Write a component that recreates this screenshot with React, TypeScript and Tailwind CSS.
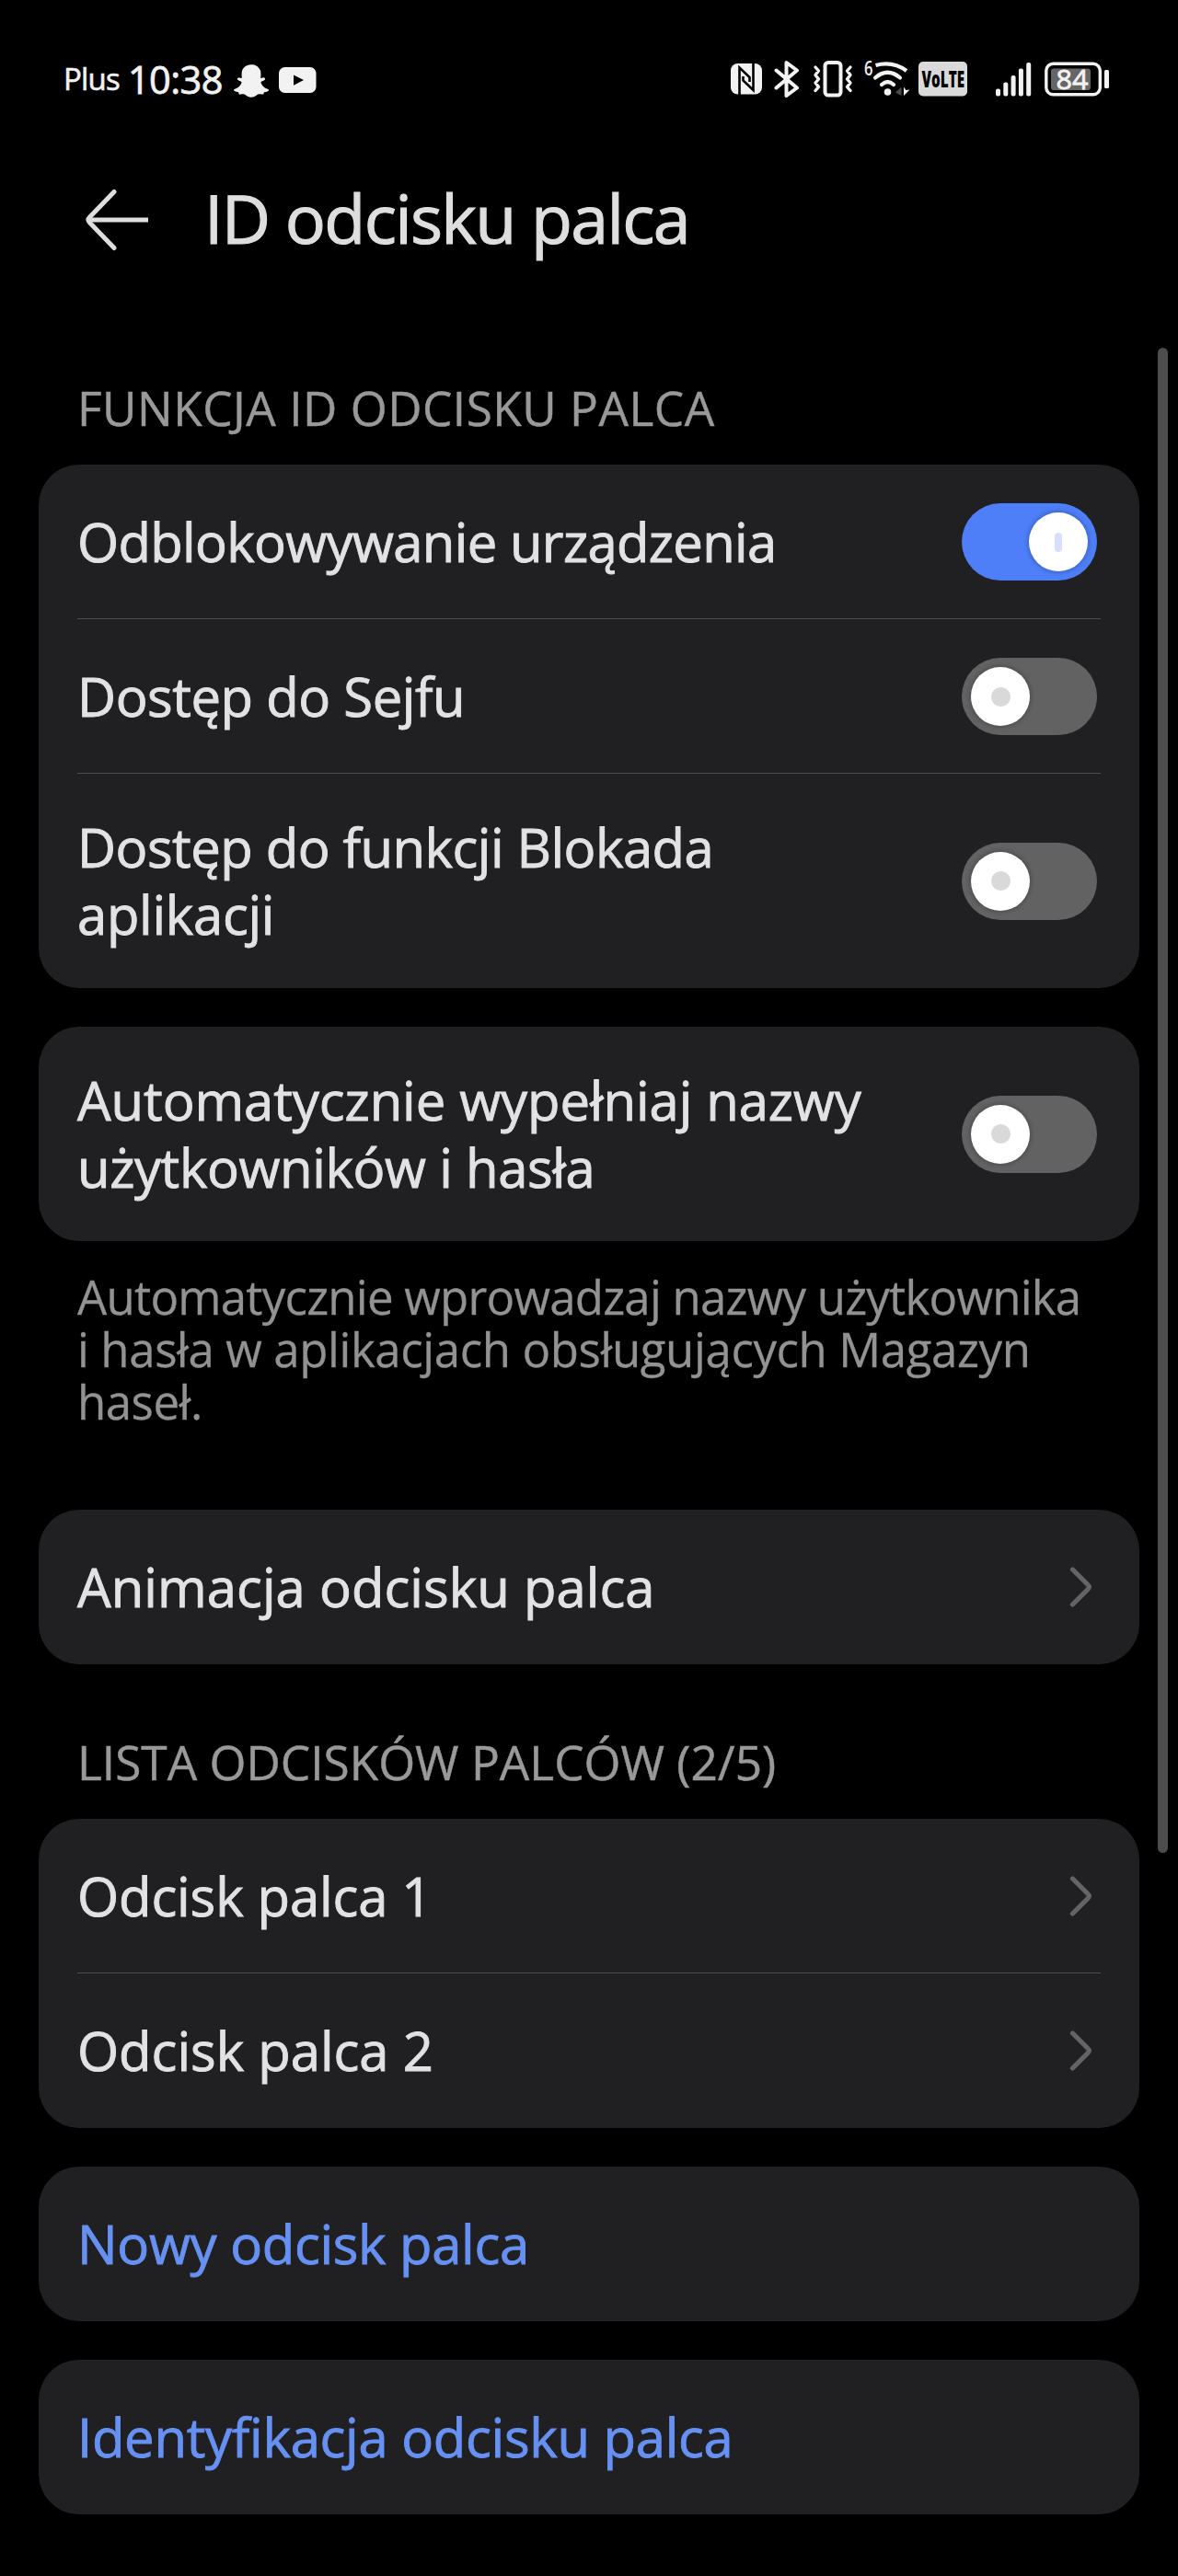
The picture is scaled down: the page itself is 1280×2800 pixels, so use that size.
import type { ReactNode } from "react";
import clsx from "clsx";
import { FaSnapchatGhost } from "react-icons/fa";

function NfcIcon() {
  return (
    <svg width="34" height="34" viewBox="0 0 34 34">
      <rect x="0" y="0" width="34" height="33.5" rx="7.5" fill="#f2f2f2" />
      <path
        d="M9.5 35V4.5L20.5 15V20M24.5 -1V29L13.5 18.5V14"
        fill="none"
        stroke="#000"
        strokeWidth="2.6"
      />
    </svg>
  );
}

function BluetoothIcon() {
  return (
    <svg width="28" height="42" viewBox="0 0 28 42">
      <path
        d="M2.5 11.5L25 30.5L13.5 39V3L25 11.5L2.5 30.5"
        fill="none"
        stroke="#f2f2f2"
        strokeWidth="4"
        strokeLinejoin="round"
        strokeLinecap="round"
      />
    </svg>
  );
}

function VibrateIcon() {
  return (
    <svg width="44" height="40" viewBox="0 0 44 40">
      <g
        fill="none"
        stroke="#f2f2f2"
        strokeLinejoin="round"
        strokeLinecap="round"
      >
        <rect x="13.5" y="2" width="17" height="35.5" rx="3.5" strokeWidth="4" />
        <path
          d="M3 7L6.5 11L3 15.5L6.5 20L3 24L6.5 28.5L3 32.5M41 7L37.5 11L41 15.5L37.5 20L41 24L37.5 28.5L41 32.5"
          strokeWidth="3.4"
        />
      </g>
    </svg>
  );
}

function WifiIcon() {
  return (
    <svg className="overflow-visible" width="50" height="40" viewBox="0 0 50 40">
      <text
        x="0"
        y="16"
        fill="#f2f2f2"
        fontSize="21"
        fontWeight="600"
        textLength="9.5"
        lengthAdjust="spacingAndGlyphs"
      >
        6
      </text>
      <g fill="none" stroke="#f2f2f2" strokeWidth="4.2">
        <path d="M12.5 5Q31 0 46 11" />
        <path d="M12 18.5Q25.5 7 39 18.5" strokeLinecap="round" />
        <path d="M19 26Q25.5 20 32 26" strokeLinecap="round" />
      </g>
      <circle cx="25.5" cy="34" r="3.8" fill="#f2f2f2" />
      <path d="M40.5 28.5V38L34 34.5Z" fill="#4a4a4a" />
      <path d="M43 28.5V38L49.5 31.5L45.5 32Z" fill="#f2f2f2" />
    </svg>
  );
}

function VolteIcon() {
  return (
    <svg className="overflow-visible" width="53" height="38" viewBox="0 0 53 38">
      <rect width="53" height="37.5" rx="5" fill="#dadada" />
      <text
        x="3.5"
        y="27.5"
        fill="#000"
        fontSize="25"
        fontWeight="800"
        textLength="46.5"
        lengthAdjust="spacingAndGlyphs"
      >
        VoLTE
      </text>
    </svg>
  );
}

function SignalIcon() {
  const bars = [8, 15, 22.5, 30, 36.5];

  return (
    <svg width="39" height="37" viewBox="0 0 39 37">
      {bars.map((height, index) => (
        <rect
          key={index}
          x={index * 8.3}
          y={36.5 - height}
          width="5"
          height={height}
          rx="2"
          fill="#f2f2f2"
        />
      ))}
    </svg>
  );
}

function BatteryIcon({ level }: { level: number }) {
  return (
    <svg className="overflow-visible" width="71" height="38" viewBox="0 0 71 38">
      <rect
        x="1.8"
        y="2.3"
        width="58.5"
        height="33.5"
        rx="7.5"
        fill="none"
        stroke="#f2f2f2"
        strokeWidth="3.4"
      />
      <rect x="7" y="7.5" width="43" height="23.5" rx="3" fill="#666" />
      <text
        x="12.5"
        y="29.5"
        fill="#f2f2f2"
        stroke="#f2f2f2"
        strokeWidth="0.8"
        fontSize="30"
        textLength="35"
        lengthAdjust="spacingAndGlyphs"
      >
        {level}
      </text>
      <rect x="65" y="9" width="5" height="20" rx="1.5" fill="#f2f2f2" />
    </svg>
  );
}

function StatusBar() {
  return (
    <div className="flex h-[172px] items-center justify-between pr-[74px] pl-[69px] text-[#f2f2f2]">
      <div className="flex items-center">
        <span className="text-[33px] tracking-[-0.8px] [-webkit-text-stroke:0.6px]">
          Plus
        </span>
        <span className="ml-[9px] text-[41.5px] tracking-[-0.6px] [-webkit-text-stroke:0.8px]">
          10:38
        </span>
        <FaSnapchatGhost className="mt-[3px] ml-[12px] size-[38px]" />
        <svg
          className="mt-[2px] ml-[11px]"
          width="41"
          height="28"
          viewBox="0 0 41 28"
        >
          <rect width="40.5" height="28" rx="6.5" fill="#f2f2f2" />
          <path d="M16 8.5L27 14L16 19.8Z" fill="#000" />
        </svg>
      </div>
      <div className="flex items-center">
        <NfcIcon />
        <div className="ml-[13px]">
          <BluetoothIcon />
        </div>
        <div className="ml-[14px]">
          <VibrateIcon />
        </div>
        <div className="ml-3">
          <WifiIcon />
        </div>
        <div className="ml-[9px]">
          <VolteIcon />
        </div>
        <div className="ml-[31px]">
          <SignalIcon />
        </div>
        <div className="ml-[14px]">
          <BatteryIcon level={84} />
        </div>
      </div>
    </div>
  );
}

function PageHeader({ title }: { title: string }) {
  return (
    <div className="flex h-[130px] items-center text-[#dedede]">
      <svg
        className="mt-1 ml-[92px]"
        width="70"
        height="68"
        viewBox="0 0 70 68"
        fill="none"
        stroke="currentColor"
        strokeWidth="5"
      >
        <path d="M32 3.5L5.5 31Q2.5 34 5.5 37L32 64.5" strokeLinecap="round" />
        <path d="M4 34H69" />
      </svg>
      <h1 className="ml-[60px] text-[73.5px] tracking-[-1.7px] [-webkit-text-stroke:1.1px]">
        {title}
      </h1>
    </div>
  );
}

function SectionLabel({
  className,
  children,
}: {
  className: string;
  children: ReactNode;
}) {
  return (
    <h2
      className={clsx(
        "flex h-[168px] items-end pb-[26px] pl-[84px] text-[51.4px] leading-[72px] text-[#999] [-webkit-text-stroke:0.5px]",
        className,
      )}
    >
      {children}
    </h2>
  );
}

function Card({
  className,
  accent = false,
  children,
}: {
  className?: string;
  accent?: boolean;
  children: ReactNode;
}) {
  return (
    <div
      className={clsx(
        "mx-[42px] rounded-[44px] bg-[#202022] text-[58px] leading-[73px] [-webkit-text-stroke:0.9px]",
        accent ? "text-[#6690f2]" : "text-[#e2e2e4]",
        className,
      )}
    >
      {children}
    </div>
  );
}

function Divider() {
  return <div className="mx-[42px] -mt-px h-px bg-[#4a4a4c]" />;
}

function Toggle({ on = false }: { on?: boolean }) {
  return (
    <div
      className={clsx(
        "flex h-[84px] w-[147px] shrink-0 items-center rounded-full px-[10px]",
        on ? "justify-end bg-[#4e7ff8]" : "bg-[#626262]",
      )}
    >
      <div className="flex size-[64px] items-center justify-center rounded-full bg-white shadow-[0_0_4px_2px_rgba(0,0,0,0.18)]">
        {on ? (
          <div className="h-[21px] w-2 rounded-full bg-[#d6e0fb]" />
        ) : (
          <div className="size-[21px] rounded-full bg-[#d9d9d9]" />
        )}
      </div>
    </div>
  );
}

function Chevron() {
  return (
    <svg
      className="mr-[5px]"
      width="25"
      height="46"
      viewBox="0 0 25 46"
      fill="none"
      stroke="#646467"
      strokeWidth="5.2"
      strokeLinecap="round"
    >
      <path d="M3.5 4L20 20.5Q22.5 23 20 25.5L3.5 42" />
    </svg>
  );
}

function Row({
  label,
  className,
  tall = false,
  children,
}: {
  label: ReactNode;
  className?: string;
  tall?: boolean;
  children?: ReactNode;
}) {
  return (
    <div
      className={clsx(
        "flex items-center justify-between pr-[46px] pl-[42px]",
        tall ? "h-[233px]" : "h-[168px]",
      )}
    >
      <div className={clsx("pb-[2px]", className)}>{label}</div>
      {children}
    </div>
  );
}

export default function App() {
  return (
    <div className="relative h-[2800px] w-[1280px] overflow-hidden bg-black font-['Open_Sans',sans-serif]">
      <StatusBar />
      <PageHeader title="ID odcisku palca" />

      <div className="mt-[35px]">
        <SectionLabel className="tracking-[0.5px]">FUNKCJA ID ODCISKU PALCA</SectionLabel>
        <Card>
          <Row label="Odblokowywanie urządzenia" className="tracking-[-0.67px]">
            <Toggle on />
          </Row>
          <Divider />
          <Row label="Dostęp do Sejfu" className="tracking-[-0.45px]">
            <Toggle />
          </Row>
          <Divider />
          <Row
            tall
            label={
              <>
                <div className="tracking-[-0.53px]">Dostęp do funkcji Blokada</div>
                <div className="tracking-[-0.3px]">aplikacji</div>
              </>
            }
          >
            <Toggle />
          </Row>
        </Card>

        <Card className="mt-[42px]">
          <Row
            tall
            label={
              <>
                <div className="tracking-[-0.08px]">Automatycznie wypełniaj nazwy</div>
                <div className="tracking-[-0.4px]">użytkowników i hasła</div>
              </>
            }
          >
            <Toggle />
          </Row>
        </Card>
        <div className="mt-8 pl-[84px] text-[51px] leading-[57px] text-[#929292] [-webkit-text-stroke:0.3px]">
          <p className="tracking-[-0.77px]">Automatycznie wprowadzaj nazwy użytkownika</p>
          <p className="tracking-[-0.4px]">i hasła w aplikacjach obsługujących Magazyn</p>
          <p className="tracking-[-0.5px]">haseł.</p>
        </div>

        <Card className="mt-[89px]">
          <Row label="Animacja odcisku palca" className="tracking-[0.05px]">
            <Chevron />
          </Row>
        </Card>

        <SectionLabel className="tracking-[0px]">LISTA ODCISKÓW PALCÓW (2/5)</SectionLabel>
        <Card>
          <Row label="Odcisk palca 1" className="tracking-[-0.1px]">
            <Chevron />
          </Row>
          <Divider />
          <Row label="Odcisk palca 2" className="tracking-[0px]">
            <Chevron />
          </Row>
        </Card>

        <Card accent className="mt-[42px]">
          <Row label="Nowy odcisk palca" className="tracking-[-0.3px]" />
        </Card>
        <Card accent className="mt-[42px]">
          <Row label="Identyfikacja odcisku palca" className="tracking-[-0.28px]" />
        </Card>
      </div>

      {/* scrollbar thumb */}
      <div className="absolute top-[378px] right-[11px] h-[1636px] w-[11px] rounded-full bg-[#4d4d4d]" />
    </div>
  );
}
